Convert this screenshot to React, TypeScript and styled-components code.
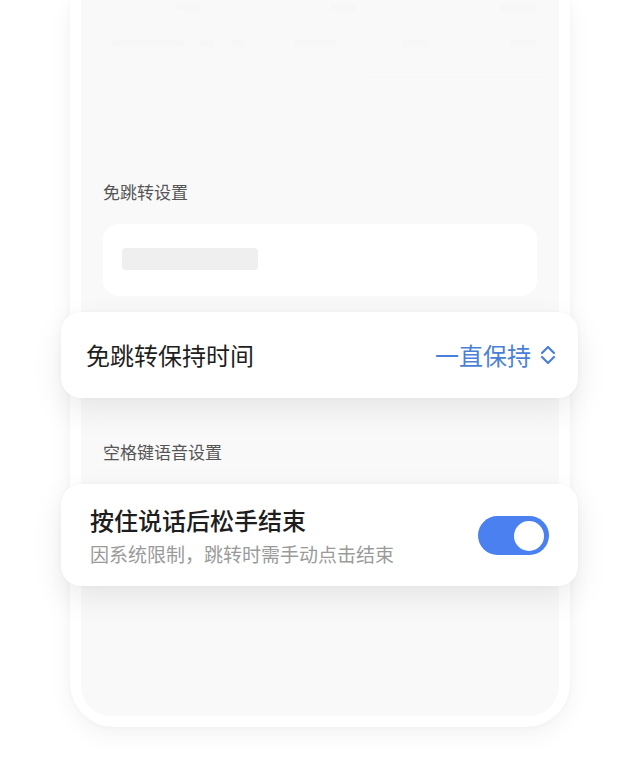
import styled, { createGlobalStyle } from "styled-components";
import { ReactElement } from "react";

const GlobalStyle = createGlobalStyle`
    html, body {
        margin: 0;
        padding: 0;
        background: #ffffff;
        font-family: "Noto Sans CJK SC", "Noto Sans", sans-serif;
    }
`;

const Page = styled.div`
    width: 640px;
    height: 772px;
    overflow: hidden;
    background: #ffffff;
    padding-left: 70px;
    box-sizing: border-box;
`;

const PhoneFrame = styled.div`
    width: 500px;
    padding: 0 11px 11px;
    box-sizing: border-box;
    background: #ffffff;
    border-radius: 0 0 44px 44px;
    box-shadow: 0 8px 24px rgba(0, 0, 0, 0.05), 0 0 6px rgba(0, 0, 0, 0.03);
`;

const Screen = styled.div`
    height: 716px;
    background: #f9f9f9;
    border-radius: 0 0 30px 30px;
    padding: 4px 22px 0;
    box-sizing: border-box;
    display: flex;
    flex-direction: column;
`;

const SkeletonRow = styled.div<{ $top: number }>`
    display: flex;
    gap: 16px;
    margin-top: ${(p) => p.$top}px;
    height: 7px;
`;

const GhostBar = styled.div<{ $w: number; $ml?: number }>`
    width: ${(p) => p.$w}px;
    margin-left: ${(p) => p.$ml ?? 0}px;
    height: 100%;
    background: #f7f7f7;
    border-radius: 3px;
`;

const GhostLine = styled.div`
    margin: 30px 0 0 265px;
    width: 175px;
    height: 1px;
    background: #f6f6f6;
`;

const SectionLabel = styled.div<{ $top: number }>`
    margin-top: ${(p) => p.$top}px;
    font-size: 17px;
    line-height: 22px;
    color: #555555;
`;

const PlainCard = styled.div`
    margin-top: 21px;
    height: 72px;
    background: #ffffff;
    border-radius: 16px;
    padding: 24px 19px;
    box-sizing: border-box;
`;

const Placeholder = styled.div`
    width: 136px;
    height: 22px;
    background: #efefef;
    border-radius: 4px;
`;

const FloatCard = styled.div<{ $top: number; $h: number }>`
    margin: ${(p) => p.$top}px -41px 0 -42px;
    height: ${(p) => p.$h}px;
    background: #ffffff;
    border-radius: 20px;
    box-shadow: 0 12px 32px rgba(0, 0, 0, 0.08), 0 0 4px rgba(0, 0, 0, 0.03);
    display: flex;
    align-items: center;
    justify-content: space-between;
    box-sizing: border-box;
`;

const PickerRow = styled(FloatCard)`
    padding: 0 22px 0 25px;
`;

const SwitchRow = styled(FloatCard)`
    padding: 0 29px 0 29px;
`;

const RowTitle = styled.div<{ $weight?: number }>`
    font-size: 24px;
    line-height: 30px;
    font-weight: ${(p) => p.$weight ?? 400};
    color: #1e1e1e;
`;

const RowText = styled.div`
    display: flex;
    flex-direction: column;
    gap: 7px;
`;

const RowHint = styled.div`
    font-size: 19px;
    line-height: 24px;
    color: #9a9a9a;
`;

const PickerValue = styled.div`
    display: flex;
    align-items: center;
    gap: 9px;
    font-size: 24px;
    line-height: 30px;
    color: #4a7fd8;
`;

const Toggle = styled.div<{ $on: boolean }>`
    width: 71px;
    height: 39px;
    border-radius: 20px;
    background: ${(p) => (p.$on ? "#4a80f0" : "#dddddd")};
    display: flex;
    align-items: center;
    justify-content: ${(p) => (p.$on ? "flex-end" : "flex-start")};
    padding: 0 5px;
    box-sizing: border-box;
    margin-top: 1px;
`;

const Knob = styled.div`
    width: 30px;
    height: 30px;
    border-radius: 50%;
    background: #ffffff;
`;

const Chevrons = (): ReactElement => (
    <svg width="16" height="22" viewBox="0 0 16 22" fill="none">
        <polyline
            points="2,9 8,3 14,9"
            stroke="#4a7fd8"
            strokeWidth="2.2"
            strokeLinecap="round"
            strokeLinejoin="round"
        />
        <polyline
            points="2,13 8,19 14,13"
            stroke="#4a7fd8"
            strokeWidth="2.2"
            strokeLinecap="round"
            strokeLinejoin="round"
        />
    </svg>
);

const App = (): ReactElement => {
    return (
        <>
            <GlobalStyle />
            <Page>
                <PhoneFrame>
                    <Screen>
                        <SkeletonRow $top={0}>
                            <GhostBar $w={32} $ml={73} />
                            <GhostBar $w={32} $ml={112} />
                            <GhostBar $w={46} $ml={128} />
                        </SkeletonRow>
                        <SkeletonRow $top={29}>
                            <GhostBar $w={80} $ml={9} />
                            <GhostBar $w={16} />
                            <GhostBar $w={16} />
                            <GhostBar $w={48} $ml={32} />
                            <GhostBar $w={32} $ml={48} />
                            <GhostBar $w={30} $ml={64} />
                        </SkeletonRow>
                        <GhostLine />
                        <SectionLabel $top={103}>免跳转设置</SectionLabel>
                        <PlainCard>
                            <Placeholder />
                        </PlainCard>
                        <PickerRow $top={16} $h={86}>
                            <RowTitle>免跳转保持时间</RowTitle>
                            <PickerValue>
                                一直保持
                                <Chevrons />
                            </PickerValue>
                        </PickerRow>
                        <SectionLabel $top={43}>空格键语音设置</SectionLabel>
                        <SwitchRow $top={21} $h={102}>
                            <RowText>
                                <RowTitle $weight={500}>按住说话后松手结束</RowTitle>
                                <RowHint>因系统限制，跳转时需手动点击结束</RowHint>
                            </RowText>
                            <Toggle $on>
                                <Knob />
                            </Toggle>
                        </SwitchRow>
                    </Screen>
                </PhoneFrame>
            </Page>
        </>
    );
};

export default App;
